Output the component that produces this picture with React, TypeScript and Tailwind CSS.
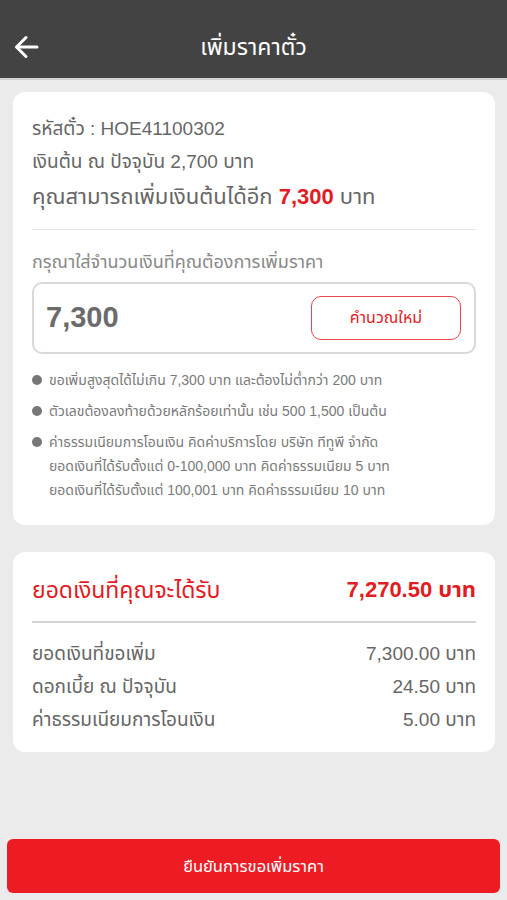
import React from "react";

const FONT = "font-['Liberation_Sans','Noto_Sans_Thai','Noto_Sans',sans-serif]";

function Bullet({ lines }: { lines: string[] }) {
  return (
    <div className="flex">
      <div className="w-[17px] shrink-0 pt-[7px]">
        <div className="h-[10px] w-[10px] rounded-full bg-[#777777]" />
      </div>
      <div className="flex flex-col">
        {lines.map((l, i) => (
          <div key={i} className="text-[14px] leading-[24px] text-[#7a7a7a]">
            {l}
          </div>
        ))}
      </div>
    </div>
  );
}

function Row({ label, value }: { label: string; value: string }) {
  return (
    <div className="flex items-center justify-between text-[19px] leading-[33px] text-[#666666]">
      <span>{label}</span>
      <span>{value}</span>
    </div>
  );
}

export default function App() {
  return (
    <div className={`${FONT} flex min-h-[900px] flex-col bg-[#ebebeb]`}>
      <header className="flex h-[80px] items-center border-b-2 border-[#d2d2d2] bg-[#434343] pt-[16px]">
        <div className="relative flex w-full items-center justify-center">
          <svg
            className="absolute left-[14px]"
            width="25"
            height="24"
            viewBox="0 0 25 24"
            fill="none"
            stroke="white"
            strokeWidth="3"
            strokeLinecap="round"
            strokeLinejoin="round"
          >
            <path d="M23 12H3" />
            <path d="M12 2.5L2.5 12L12 21.5" />
          </svg>
          <h1 className="text-[23px] leading-[32px] text-white">เพิ่มราคาตั๋ว</h1>
        </div>
      </header>

      <section className="mx-[13px] mt-[12px] w-[482px] rounded-[12px] bg-white px-[19px] pb-[23px] pt-[20px]">
        <div className="text-[19px] leading-[33px] text-[#666666]">รหัสตั๋ว : HOE41100302</div>
        <div className="text-[19px] leading-[33px] text-[#666666]">เงินต้น ณ ปัจจุบัน 2,700 บาท</div>
        <div className="text-[22px] leading-[38px] text-[#666666]">
          คุณสามารถเพิ่มเงินต้นได้อีก <span className="font-bold text-[#e31b23]">7,300</span> บาท
        </div>
        <div className="mt-[13px] h-px bg-[#e6e6e6]" />
        <div className="mt-[20px] text-[18px] leading-[24px] text-[#888888]">
          กรุณาใส่จำนวนเงินที่คุณต้องการเพิ่มราคา
        </div>
        <div className="mt-[8px] flex h-[72px] items-center justify-between rounded-[10px] border-2 border-[#d9d9d9] pl-[12px] pr-[13px]">
          <span className="text-[29px] font-bold text-[#6b6b6b]">7,300</span>
          <button className="flex h-[44px] w-[150px] items-center justify-center rounded-[10px] border-[1.5px] border-[#e8474d] text-[16px] text-[#e31b23]">
            คำนวณใหม่
          </button>
        </div>
        <div className="mt-[14px] flex flex-col gap-[7px]">
          <Bullet lines={["ขอเพิ่มสูงสุดได้ไม่เกิน 7,300 บาท และต้องไม่ต่ำกว่า 200 บาท"]} />
          <Bullet lines={["ตัวเลขต้องลงท้ายด้วยหลักร้อยเท่านั้น เช่น 500 1,500 เป็นต้น"]} />
          <Bullet
            lines={[
              "ค่าธรรมเนียมการโอนเงิน คิดค่าบริการโดย บริษัท ทีทูพี จำกัด",
              "ยอดเงินที่ได้รับตั้งแต่ 0-100,000 บาท คิดค่าธรรมเนียม 5 บาท",
              "ยอดเงินที่ได้รับตั้งแต่ 100,001 บาท คิดค่าธรรมเนียม 10 บาท",
            ]}
          />
        </div>
      </section>

      <section className="mx-[13px] mt-[27px] w-[482px] rounded-[12px] bg-white px-[19px] pb-[16px] pt-[20px]">
        <div className="flex items-center justify-between leading-[36px] text-[#e31b23]">
          <span className="text-[23px]">ยอดเงินที่คุณจะได้รับ</span>
          <span className="text-[22px] font-bold">7,270.50 บาท</span>
        </div>
        <div className="mt-[13px] h-[2px] bg-[#d4d4d4]" />
        <div className="mt-[14px]">
          <Row label="ยอดเงินที่ขอเพิ่ม" value="7,300.00 บาท" />
          <Row label="ดอกเบี้ย ณ ปัจจุบัน" value="24.50 บาท" />
          <Row label="ค่าธรรมเนียมการโอนเงิน" value="5.00 บาท" />
        </div>
      </section>

      <div className="flex-1" />

      <button className="mx-[7px] mb-[7px] flex h-[54px] w-[493px] items-center justify-center rounded-[6px] bg-[#ed1c24] text-[16.5px] text-white">
        ยืนยันการขอเพิ่มราคา
      </button>
    </div>
  );
}
